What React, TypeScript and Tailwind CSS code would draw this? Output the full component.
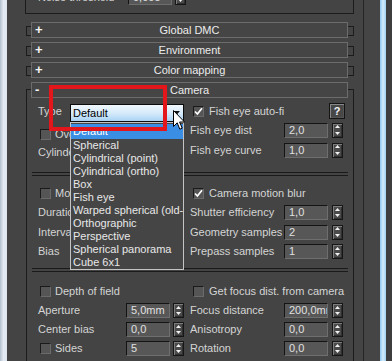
import React from "react";

const LABEL = "text-[11px] leading-[13px] text-[#d4d4d4] whitespace-nowrap";

function Spinner() {
  return (
    <div className="w-[11px] h-[15px] shrink-0 border border-[#161616] bg-[#4a4a4a] flex flex-col shadow-[inset_1px_1px_0_#7c7c7c,inset_-1px_-1px_0_#303030]">
      <div className="flex-1 flex items-center justify-center">
        <svg width="5" height="3" viewBox="0 0 5 3">
          <path d="M0 3 L2.5 0 L5 3 Z" fill="#f2f2f2" />
        </svg>
      </div>
      <div className="flex-1 flex items-center justify-center">
        <svg width="5" height="3" viewBox="0 0 5 3">
          <path d="M0 0 L2.5 3 L5 0 Z" fill="#f2f2f2" />
        </svg>
      </div>
    </div>
  );
}

function Field({ v }: { v: string }) {
  return (
    <div className="h-[15px] w-[44px] shrink-0 border border-[#141414] border-b-[#6e6e6e] border-r-[#6e6e6e] bg-[#575757] overflow-hidden whitespace-nowrap pl-[4px] text-[11px] leading-[13px] text-[#e0e0e0]">
      {v}
    </div>
  );
}

function Check({ checked }: { checked?: boolean }) {
  return (
    <div className="w-[11px] h-[11px] shrink-0 border border-[#1a1a1a] border-b-[#6a6a6a] border-r-[#6a6a6a] bg-[#555555] flex items-center justify-center">
      {checked && (
        <svg width="9" height="9" viewBox="0 0 9 9">
          <path d="M1 4.5 L3.4 7 L8 1.2" stroke="#ffffff" strokeWidth="1.7" fill="none" />
        </svg>
      )}
    </div>
  );
}

function Header({ sign, title }: { sign: string; title: string }) {
  return (
    <div className="h-[16px] w-[317px] border border-[#6c6c6c] bg-[#454545] grid grid-cols-[22px_1fr_22px] items-center">
      <span className="pl-[3px] text-[13px] font-bold leading-[14px] text-[#f4f4f4]">{sign}</span>
      <span className="text-center text-[11px] leading-[14px] text-[#ececec] whitespace-nowrap">{title}</span>
      <span />
    </div>
  );
}

function Collapsed({ title, mt }: { title: string; mt: string }) {
  return (
    <div className={`ml-[1px] w-[328px] h-[10px] border border-[#1c1c1c] ${mt}`}>
      <div className="-mt-[5px] ml-[4px]">
        <Header sign="+" title={title} />
      </div>
    </div>
  );
}

function LeftSpin({ label, v, check }: { label: string; v: string; check?: boolean }) {
  return (
    <div className="w-[163px] pl-[11px] flex items-center">
      <div className="w-[88px] flex items-center">
        {check && (
          <div className="ml-[2px] mr-[4px]">
            <Check />
          </div>
        )}
        <span className={LABEL}>{label}</span>
      </div>
      <Field v={v} />
      <div className="ml-[3px]">
        <Spinner />
      </div>
    </div>
  );
}

function RightSpin({ label, v }: { label: string; v: string }) {
  return (
    <div className="flex-1 flex items-center">
      <div className="w-[94px] overflow-hidden">
        <span className={LABEL}>{label}</span>
      </div>
      <Field v={v} />
      <div className="ml-[4px]">
        <Spinner />
      </div>
    </div>
  );
}

function LeftLabel({ label, check }: { label: string; check?: boolean }) {
  return (
    <div className="w-[163px] pl-[11px] flex items-center">
      {check && (
        <div className="ml-[2px] mr-[4px]">
          <Check />
        </div>
      )}
      <span className={LABEL}>{label}</span>
    </div>
  );
}

function RightCheck({ label, checked }: { label: string; checked?: boolean }) {
  return (
    <div className="flex-1 flex items-center">
      <div className="ml-[3px] mr-[5px]">
        <Check checked={checked} />
      </div>
      <span className={LABEL}>{label}</span>
    </div>
  );
}

function Separator() {
  return <div className="ml-[5px] w-[316px] h-[4px] border-t border-b border-[#1a1a1a]" />;
}

const ITEMS = [
  "Spherical",
  "Cylindrical (point)",
  "Cylindrical (ortho)",
  "Box",
  "Fish eye",
  "Warped spherical (old-style)",
  "Orthographic",
  "Perspective",
  "Spherical panorama",
  "Cube 6x1",
];

export default function App() {
  return (
    <div className="relative w-[392px] h-[361px] overflow-hidden flex bg-[#444444] font-['Liberation_Sans',Arial,sans-serif] text-[11px]">
      <div className="w-[7px] h-full bg-gradient-to-r from-[#b3c0cf] via-[#e4ebf4] to-[#dde5ee]" />
      <div className="w-[18px] h-full" />

      {/* main panel */}
      <div className="w-[329px] h-full flex flex-col">
        {/* previous rollout end */}
        <div className="h-[14px] shrink-0 border-l border-r border-b border-[#1c1c1c] pl-[12px]">
          <div className="-mt-[10px] h-[15px] flex items-center">
            <div className="w-[90px]">
              <span className={LABEL}>Noise threshold</span>
            </div>
            <Field v="0,005" />
            <div className="ml-[3px]">
              <Spinner />
            </div>
          </div>
        </div>

        <Collapsed title="Global DMC" mt="mt-[12px]" />
        <Collapsed title="Environment" mt="mt-[10px]" />
        <Collapsed title="Color mapping" mt="mt-[10px]" />

        {/* Camera rollout */}
        <div className="ml-[1px] w-[328px] flex-1 border-l border-r border-t border-[#1c1c1c] mt-[13px] flex flex-col">
          <div className="-mt-[8px] ml-[4px]">
            <Header sign="-" title="Camera" />
          </div>

          {/* section 1 */}
          <div className="h-[74px] shrink-0 flex">
            <div className="w-[163px] pl-[11px] flex flex-col">
              <div className="mt-[4px] h-[20px] flex items-end">
                <span className={`${LABEL} w-[32px] mb-[4px]`}>Type</span>
                <div className="w-[114px] h-[18px] border border-[#0c0c0c] bg-gradient-to-b from-[#f1f8fe] via-[#d6ebfb] to-[#a9d3f4] flex items-center">
                  <span className="pl-[2px] text-[11px] leading-[13px] text-black flex-1">Default</span>
                  <svg width="7" height="4" viewBox="0 0 7 4" className="mr-[3px]">
                    <path d="M0 0 L3.5 4 L7 0 Z" fill="#111" />
                  </svg>
                </div>
              </div>
              <div className="mt-[3px] h-[18px] flex items-center">
                <div className="ml-[2px] mr-[4px]">
                  <Check />
                </div>
                <span className={LABEL}>Override FOV</span>
              </div>
              <div className="h-[18px] flex items-center">
                <span className={LABEL}>Cylinder height</span>
              </div>
            </div>
            <div className="flex-1 flex flex-col">
              <div className="mt-[4px] h-[18px] flex items-center">
                <div className="ml-[3px] mr-[5px]">
                  <Check checked />
                </div>
                <span className={LABEL}>Fish eye auto-fi</span>
                <div className="ml-auto mr-[8px] w-[16px] h-[16px] border border-[#141414] bg-[#474747] shadow-[inset_1px_1px_0_#888,inset_-1px_-1px_0_#555] flex items-center justify-center text-[11px] font-bold text-[#f4f4f4] leading-[12px]">
                  ?
                </div>
              </div>
              <div className="h-[20px] flex">
                <RightSpin label="Fish eye dist" v="2,0" />
              </div>
              <div className="h-[20px] flex">
                <RightSpin label="Fish eye curve" v="1,0" />
              </div>
            </div>
          </div>

          <Separator />

          {/* section 2 */}
          <div className="h-[92px] shrink-0 pt-[8px] flex flex-col">
            <div className="h-[19px] flex">
              <LeftLabel label="Motion blur" check />
              <RightCheck label="Camera motion blur" checked />
            </div>
            <div className="h-[19px] flex">
              <LeftLabel label="Duration (frames)" />
              <RightSpin label="Shutter efficiency" v="1,0" />
            </div>
            <div className="h-[20px] flex">
              <LeftLabel label="Interval center" />
              <RightSpin label="Geometry samples" v="2" />
            </div>
            <div className="h-[19px] flex">
              <LeftLabel label="Bias" />
              <RightSpin label="Prepass samples" v="1" />
            </div>
          </div>

          <Separator />

          {/* section 3 */}
          <div className="pt-[10px] flex flex-col">
            <div className="h-[19px] flex">
              <LeftLabel label="Depth of field" check />
              <RightCheck label="Get focus dist. from camera" />
            </div>
            <div className="h-[19px] flex">
              <LeftSpin label="Aperture" v="5,0mm" />
              <RightSpin label="Focus distance" v="200,0mm" />
            </div>
            <div className="h-[19px] flex">
              <LeftSpin label="Center bias" v="0,0" />
              <RightSpin label="Anisotropy" v="0,0" />
            </div>
            <div className="h-[19px] flex">
              <LeftSpin label="Sides" v="5" check />
              <RightSpin label="Rotation" v="0,0" />
            </div>
          </div>
        </div>
      </div>

      <div className="w-[9px] h-full" />
      <div className="w-[1px] h-full bg-[#262626]" />
      <div className="w-[16px] h-full bg-[#454545]" />
      <div className="w-[6px] h-full bg-gradient-to-r from-[#8cc6ee] via-[#d4edfc] to-[#9fd1f2]" />
      <div className="w-[6px] h-full bg-[#3e3e3e]" />

      {/* open dropdown list */}
      <div className="absolute left-[70px] top-[122px] w-[114px] h-[148px] border border-[#c4c4c4] bg-[#454545] overflow-hidden flex flex-col">
        <div className="mt-[1px] h-[15px] shrink-0 bg-[#3a8ee4] flex items-center pl-[2px] text-[11px] leading-[13px] text-white">
          Default
        </div>
        {ITEMS.map((t) => (
          <div key={t} className="h-[13px] shrink-0 flex items-center pl-[2px] text-[11px] leading-[13px] text-[#e8e8e8] whitespace-nowrap">
            {t}
          </div>
        ))}
      </div>

      {/* red highlight rectangle */}
      <div className="absolute left-[49px] top-[85px] w-[118px] h-[46px] border-[4px] border-[#e3161b]" />

      {/* mouse cursor */}
      <svg className="absolute left-[173px] top-[110px]" width="13" height="21" viewBox="0 0 13 21">
        <path d="M0.5 0.5 L0.5 16.5 L4.2 12.8 L6.8 19.2 L9.2 18.2 L6.6 12 L11.5 12 Z" fill="#ffffff" stroke="#000000" strokeWidth="1" strokeLinejoin="miter" />
      </svg>
    </div>
  );
}
